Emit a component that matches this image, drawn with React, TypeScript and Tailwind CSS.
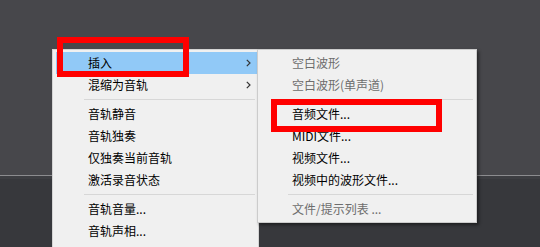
import React from 'react'

type Row = { label?: string; sep?: boolean; arrow?: boolean; disabled?: boolean; active?: boolean }

const mainItems: Row[] = [
  { label: '插入', arrow: true, active: true },
  { label: '混缩为音轨', arrow: true },
  { sep: true },
  { label: '音轨静音' },
  { label: '音轨独奏' },
  { label: '仅独奏当前音轨' },
  { label: '激活录音状态' },
  { sep: true },
  { label: '音轨音量...' },
  { label: '音轨声相...' },
]

const subItems: Row[] = [
  { label: '空白波形', disabled: true },
  { label: '空白波形(单声道)', disabled: true },
  { sep: true },
  { label: '音频文件...' },
  { label: 'MIDI文件...' },
  { label: '视频文件...' },
  { label: '视频中的波形文件...' },
  { sep: true },
  { label: '文件/提示列表 ...', disabled: true },
]

function Chevron() {
  return (
    <svg width="5" height="8" viewBox="0 0 5 8" fill="none" className="shrink-0">
      <path d="M0.8 0.8L4 4L0.8 7.2" stroke="#333" strokeWidth="1.2" />
    </svg>
  )
}

function MenuRows({ items, padLeft, sepLeft }: { items: Row[]; padLeft: string; sepLeft: string }) {
  return (
    <>
      {items.map((it, i) =>
        it.sep ? (
          <div key={i} className={`h-[7px] flex items-center ${sepLeft} mr-[2px]`}>
            <div className="h-px w-full bg-[#d7d7d7]" />
          </div>
        ) : (
          <div
            key={i}
            className={`h-[22px] flex items-center justify-between ${padLeft} pr-[6px] ${
              it.active ? 'bg-[#91c9f7]' : ''
            } ${it.disabled ? 'text-[#6d6d6d]' : 'text-black'}`}
          >
            <span className="leading-[22px] whitespace-nowrap">{it.label}</span>
            {it.arrow && <Chevron />}
          </div>
        )
      )}
    </>
  )
}

export default function App() {
  return (
    <div
      className="relative w-[540px] h-[247px] overflow-hidden text-[12px]"
      style={{ fontFamily: '"Noto Sans CJK SC", "Microsoft YaHei", sans-serif' }}
    >
      {/* backdrop */}
      <div className="h-[175px] bg-[#47474b]" />
      <div className="h-px bg-[#8c8c8f]" />
      <div className="h-[3px] bg-[#3d3e42]" />
      <div className="h-[68px] bg-[#37383c]" />

      {/* main context menu */}
      <div className="absolute left-[52px] top-[49px] w-[207px] h-[220px] bg-[#f0f0f0] border border-[#d4d4d4] pt-[2px] pl-[3px] pr-px">
        <MenuRows items={mainItems} padLeft="pl-[32px]" sepLeft="ml-[28px]" />
      </div>

      {/* insert submenu */}
      <div className="absolute left-[257px] top-[49px] w-[220px] bg-[#f0f0f0] border border-[#cccccc] pt-[2px] pb-[2px] pl-[3px] pr-px shadow-[2px_2px_3px_rgba(0,0,0,0.45)]">
        <MenuRows items={subItems} padLeft="pl-[31px]" sepLeft="ml-[27px]" />
      </div>

      {/* annotation boxes */}
      <div className="absolute left-[57px] top-[37px] w-[132px] h-[40px] border-[6px] border-[#ff0000]" />
      <div className="absolute left-[271px] top-[99px] w-[171px] h-[33px] border-[6px] border-[#ff0000]" />
    </div>
  )
}
